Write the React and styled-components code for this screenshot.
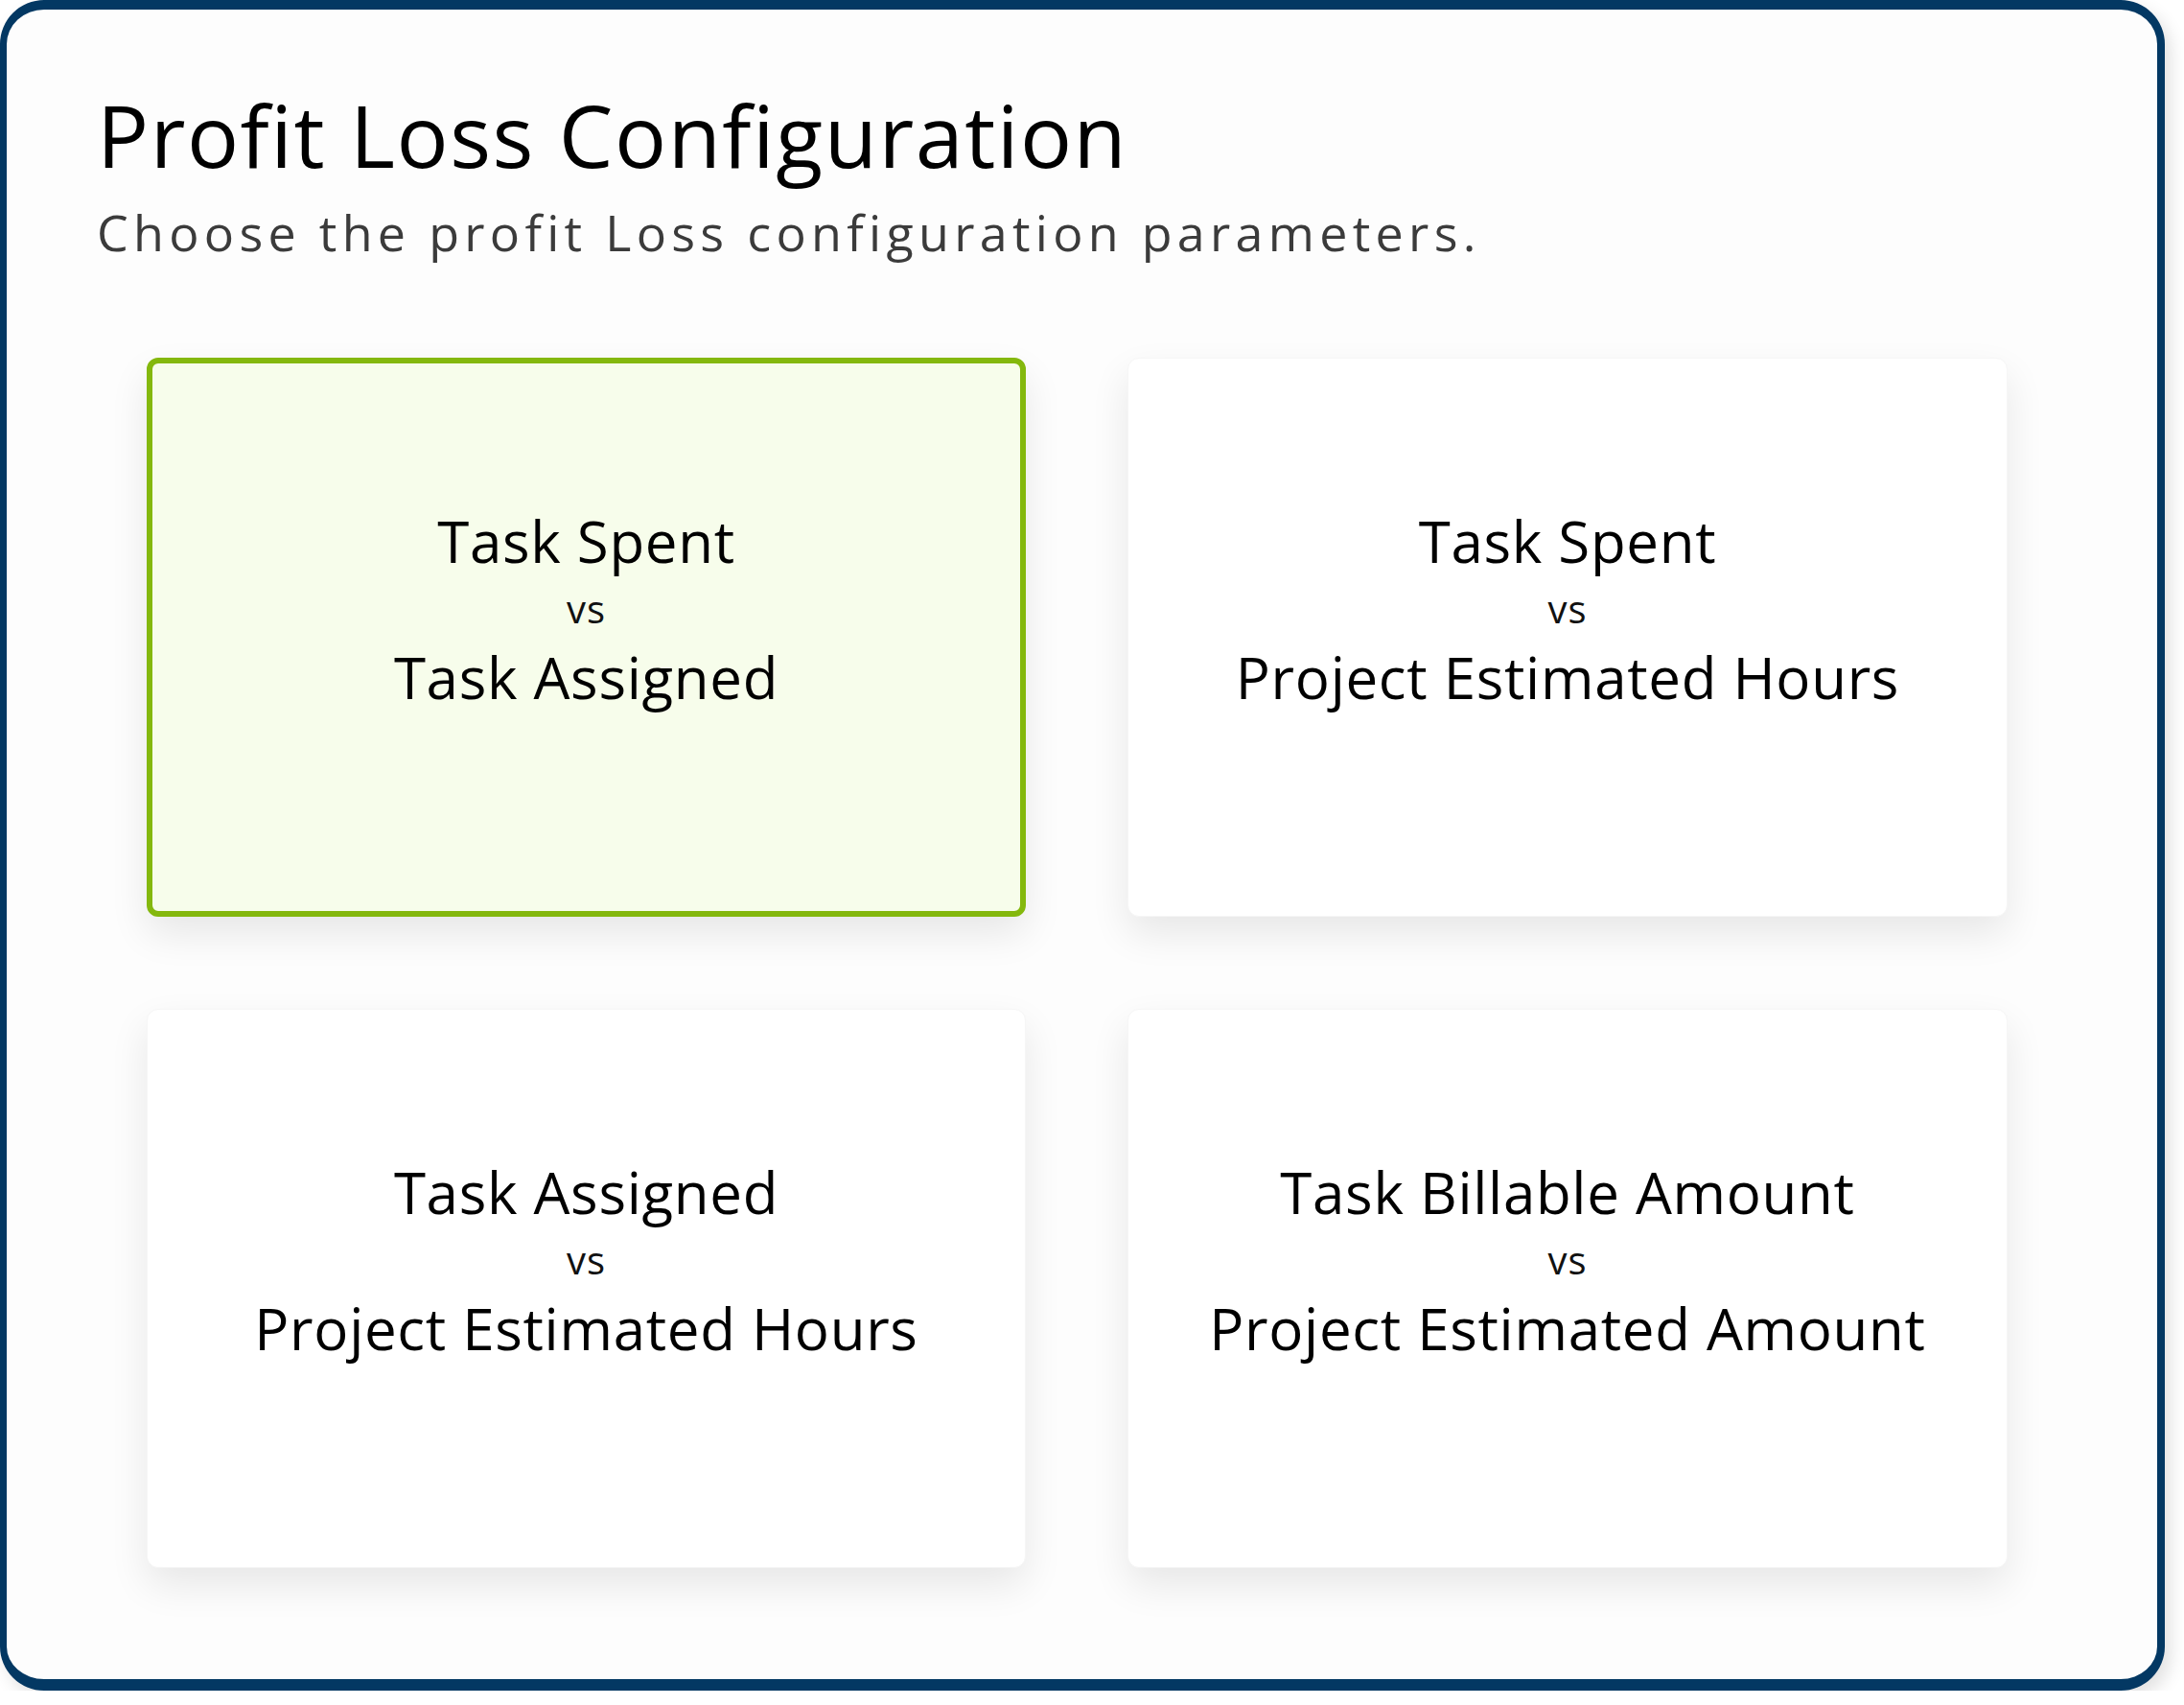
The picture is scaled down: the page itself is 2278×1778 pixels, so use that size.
import React from 'react';
import styled, { createGlobalStyle } from 'styled-components';

const GlobalStyle = createGlobalStyle`
  html, body {
    margin: 0;
    padding: 0;
    background: #ffffff;
  }
  body {
    font-family: "Open Sans", "Liberation Sans", sans-serif;
    color: #000;
  }
`;

const options = [
  { top: 'Task Spent', bottom: 'Task Assigned' },
  { top: 'Task Spent', bottom: 'Project Estimated Hours' },
  { top: 'Task Assigned', bottom: 'Project Estimated Hours' },
  { top: 'Task Billable Amount', bottom: 'Project Estimated Amount' },
];

const App = () => {
  const selected = 0;

  return (
    <React.Fragment>
      <GlobalStyle />
      <Frame>
        <Header>
          <Title>Profit Loss Configuration</Title>
          <Subtitle>Choose the profit Loss configuration parameters.</Subtitle>
        </Header>
        <Grid>
          {options.map((o, i) => (
            <Card key={i} $active={i === selected}>
              <Big>{o.top}</Big>
              <Vs>vs</Vs>
              <Big>{o.bottom}</Big>
            </Card>
          ))}
        </Grid>
      </Frame>
    </React.Fragment>
  );
};

const Frame = styled.div`
  box-sizing: border-box;
  width: 2258px;
  height: 1763px;
  border-style: solid;
  border-color: #033863;
  border-width: 10px 8px 12px 7px;
  border-radius: 46px;
  background: #fdfdfd;
  box-shadow: 6px 8px 18px rgba(0, 0, 0, 0.12);
  overflow: hidden;
`;

const Header = styled.div`
  padding: 76px 0 0 94px;
`;

const Title = styled.h1`
  margin: 0;
  font-weight: 400;
  font-size: 90px;
  line-height: 108px;
  letter-spacing: 1.5px;
  color: #000;
`;

const Subtitle = styled.p`
  margin: 16px 0 0;
  font-weight: 400;
  font-size: 52px;
  line-height: 64px;
  letter-spacing: 5.3px;
  color: #3b3b3b;
`;

const Grid = styled.div`
  display: grid;
  grid-template-columns: 917px 918px;
  grid-auto-rows: 583px;
  column-gap: 106px;
  row-gap: 96px;
  margin: 99px 0 0 146px;
`;

const Card = styled.div`
  box-sizing: border-box;
  display: flex;
  flex-direction: column;
  align-items: center;
  justify-content: center;
  padding-bottom: 60px;
  border-radius: 12px;
  background: ${(p) => (p.$active ? '#f7fdeb' : '#ffffff')};
  border: ${(p) => (p.$active ? '6px solid #84b80d' : '1px solid #f6f6f6')};
  box-shadow: 0 18px 40px rgba(0, 0, 0, 0.09);
  text-align: center;
`;

const Big = styled.div`
  font-size: 60px;
  line-height: 72px;
  letter-spacing: 0.7px;
  color: #000;
`;

const Vs = styled.div`
  font-size: 40px;
  line-height: 70px;
  letter-spacing: 1px;
  color: #111;
`;

export default App;
